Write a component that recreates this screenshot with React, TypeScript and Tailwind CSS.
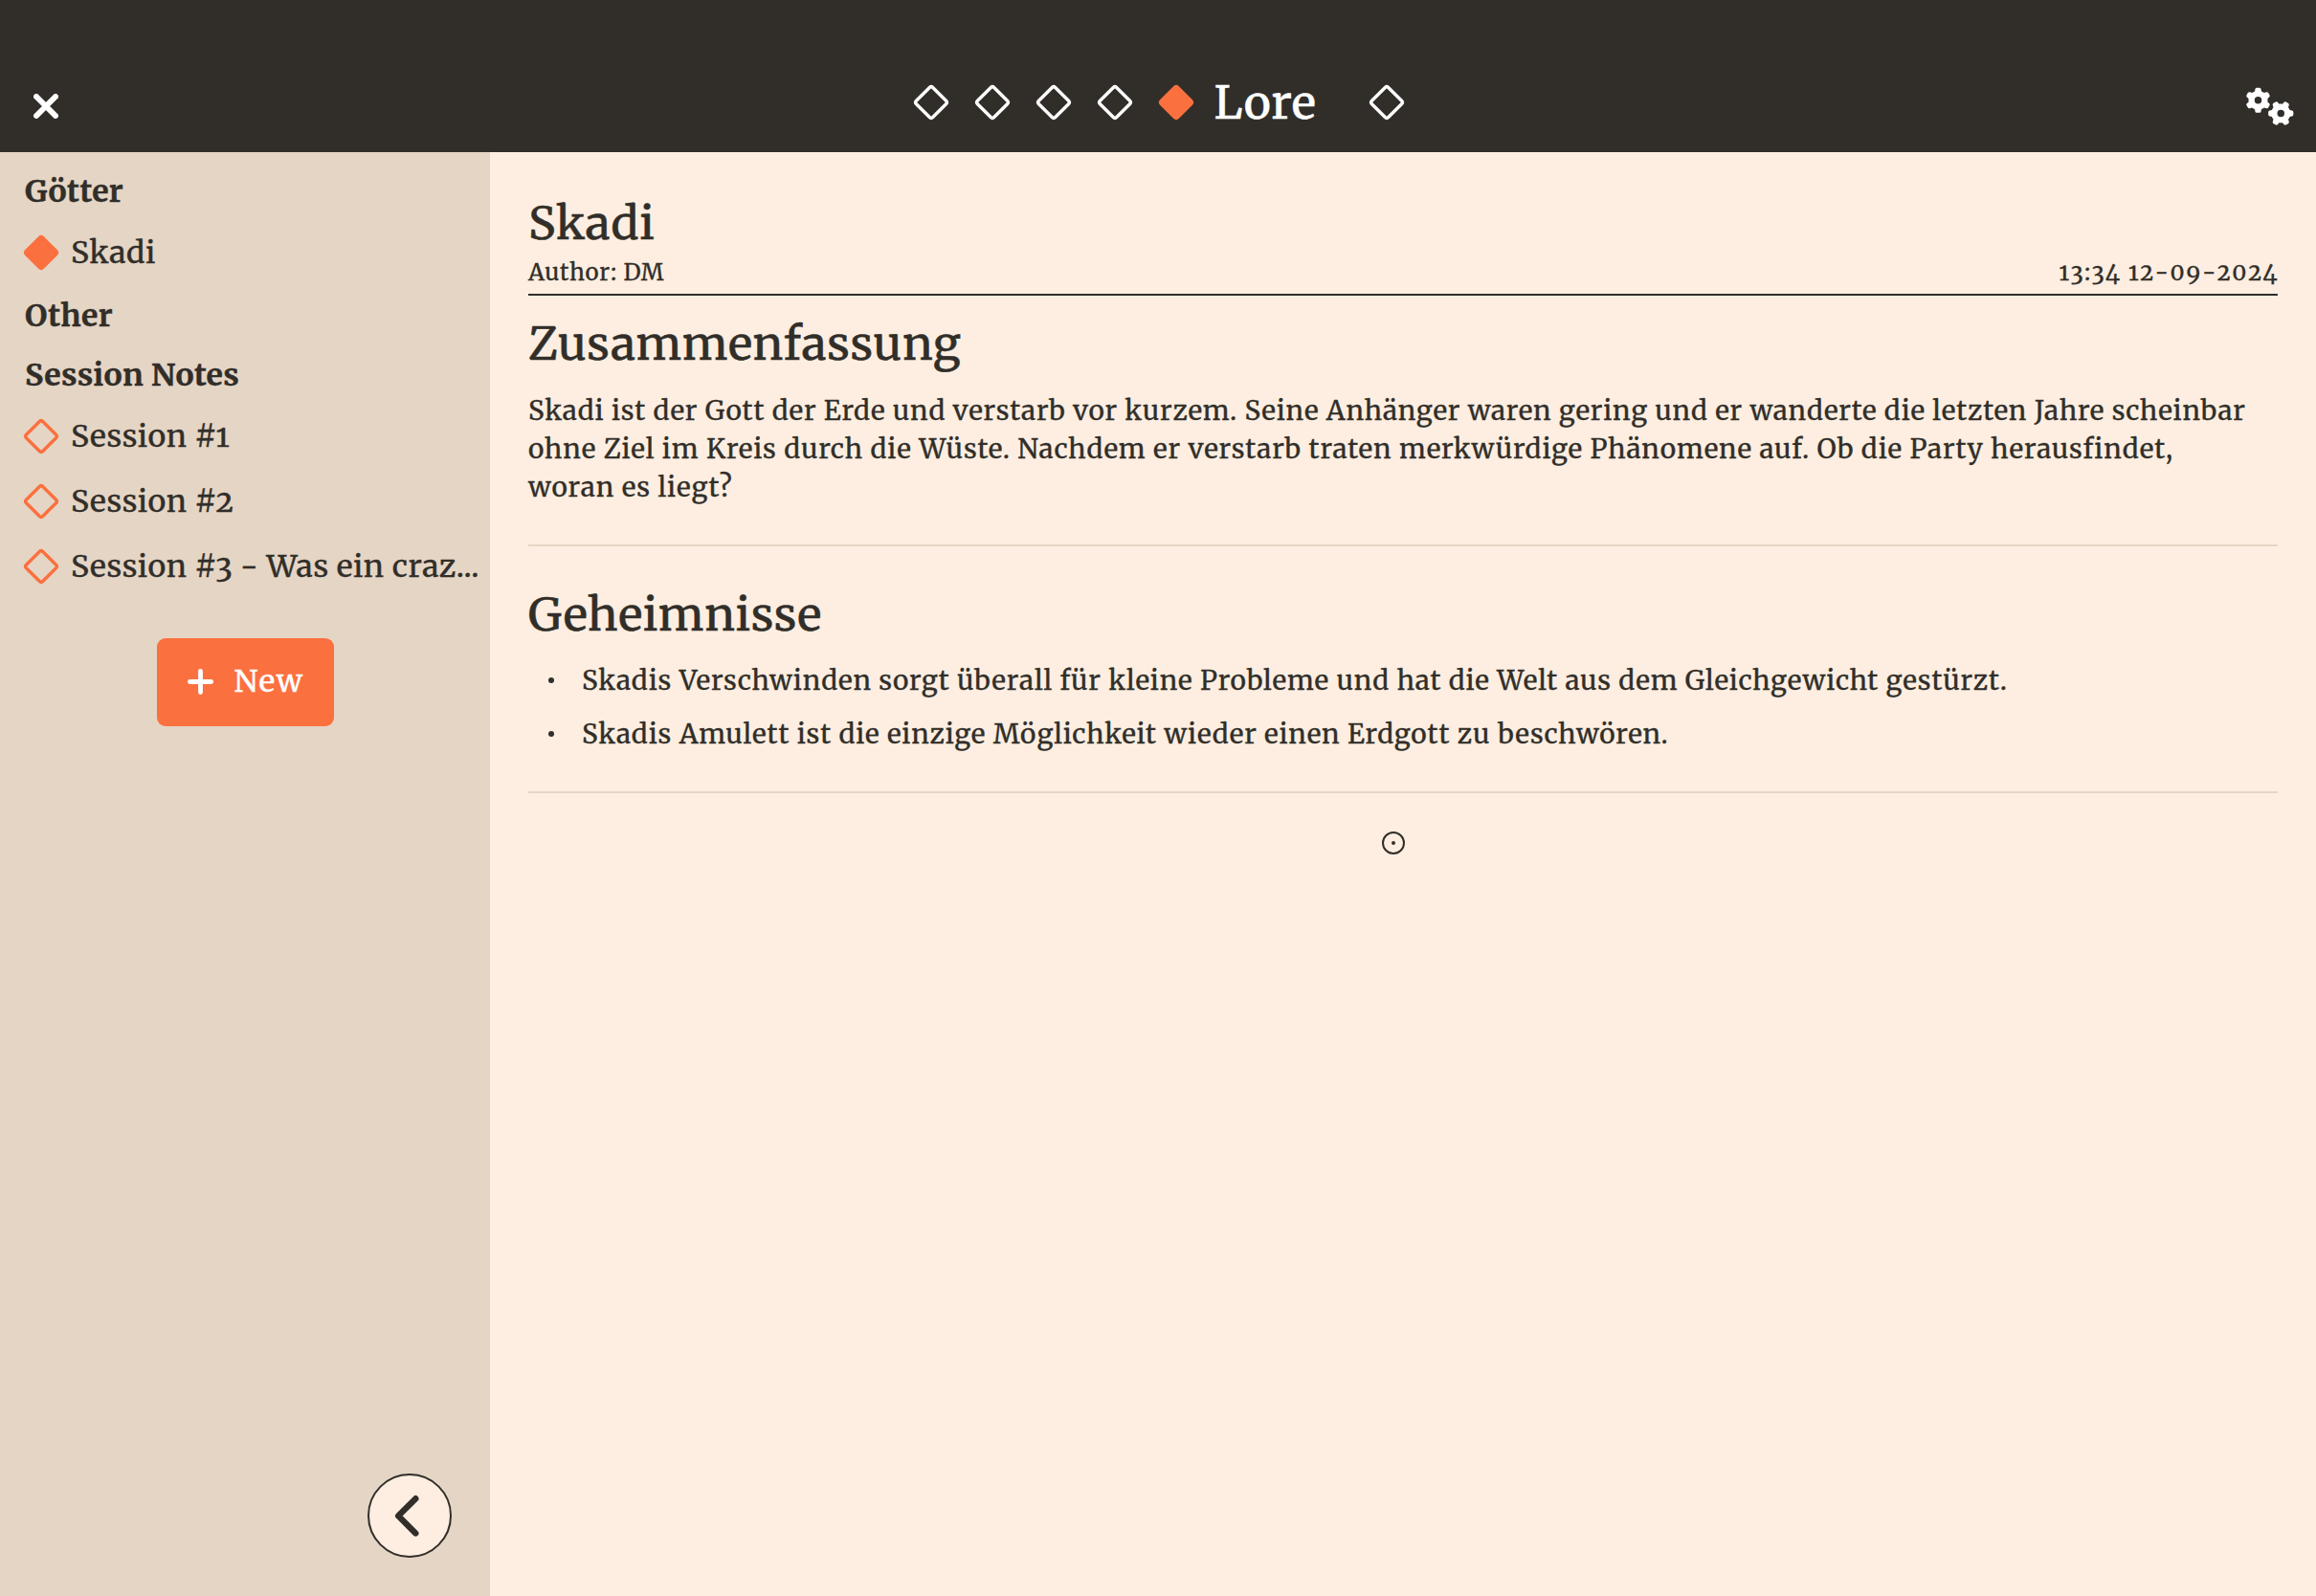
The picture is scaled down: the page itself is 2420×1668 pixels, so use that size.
import { FaGears } from "react-icons/fa6";

function Diamond({ className }: { className: string }) {
  return (
    <svg className={`size-[38px] shrink-0 ${className}`} viewBox="-19 -19 38 38" stroke="currentColor" strokeWidth="3.4">
      <rect x="-12.2" y="-12.2" width="24.4" height="24.4" rx="2.4" transform="rotate(45)" />
    </svg>
  );
}

function Header() {
  return (
    <header className="grid h-[159px] shrink-0 grid-cols-[1fr_auto_1fr] items-center bg-[#312e29] pt-14 text-white">
      <button aria-label="Close" className="mt-[7px] ml-[35px] justify-self-start">
        <svg className="size-[26px]" viewBox="0 0 26 26" fill="none" stroke="currentColor" strokeWidth="6" strokeLinecap="round">
          <path d="M3 3l20 20M23 3L3 23" />
        </svg>
      </button>
      <nav className="flex items-center gap-[26px] pb-px pl-px">
        <Diamond className="fill-none text-white" />
        <Diamond className="fill-none text-white" />
        <Diamond className="fill-none text-white" />
        <Diamond className="fill-none text-white" />
        <Diamond className="fill-[#fb703f] text-[#fb703f]" />
        <span className="-ml-[5px] w-[135px] text-5xl leading-[60px] tracking-[0.9px] [-webkit-text-stroke:0.5px]">Lore</span>
        <Diamond className="fill-none text-white" />
      </nav>
      <button aria-label="Settings" className="mt-[7px] mr-[23px] justify-self-end">
        <FaGears className="h-10 w-[50px]" />
      </button>
    </header>
  );
}

function Group({ title }: { title: string }) {
  return <h2 className="h-[62px] pl-[26px] text-[32px] leading-[62px] font-bold tracking-[0.4px]">{title}</h2>;
}

function Entry({ title, active = false }: { title: string; active?: boolean }) {
  return (
    <div className="flex h-[68px] items-center gap-3 pb-0.5 pl-6">
      <Diamond className={active ? "fill-[#fb703f] text-[#fb703f]" : "fill-none text-[#fb703f]"} />
      <span className="text-[32px] tracking-[0.56px] whitespace-nowrap">{title}</span>
    </div>
  );
}

function Sidebar() {
  return (
    <aside className="flex w-[512px] shrink-0 flex-col bg-[#e5d5c5] pt-2.5 [-webkit-text-stroke:0.35px]">
      <Group title="Götter" />
      <Entry title="Skadi" active />
      <Group title="Other" />
      <Group title="Session Notes" />
      <Entry title="Session #1" />
      <Entry title="Session #2" />
      <Entry title="Session #3 - Was ein craz..." />
      <button className="mt-10 flex h-[92px] w-[185px] items-center gap-[22px] self-center rounded-[9px] bg-[#fb703f] pb-0.5 pl-8 text-white">
        <svg className="size-[27px]" viewBox="0 0 27 27" fill="none" stroke="currentColor" strokeWidth="4.8" strokeLinecap="round">
          <path d="M13.5 2.4v22.2M2.4 13.5h22.2" />
        </svg>
        <span className="text-[32px] tracking-[1.4px]">New</span>
      </button>
      <button
        aria-label="Collapse sidebar"
        className="mt-auto mr-10 mb-10 flex size-[88px] items-center justify-center self-end rounded-full border-2 border-[#312e29] bg-[#fdeee1]"
      >
        <svg className="mr-1.5 h-11 w-[26px]" viewBox="0 0 26 44" fill="none" stroke="currentColor" strokeWidth="6.4" strokeLinecap="round" strokeLinejoin="round">
          <path d="M22.3 4.2L4.2 22.3l18.1 18.1" />
        </svg>
      </button>
    </aside>
  );
}

function Title({ className, text }: { className: string; text: string }) {
  return (
    <h2 className={`h-[60px] text-5xl leading-[60px] tracking-[0.62px] [-webkit-text-stroke:0.5px] ${className}`}>{text}</h2>
  );
}

function Bullet({ text }: { text: string }) {
  return (
    <li className="flex h-14 items-center">
      <span className="mr-[29px] ml-[21px] size-1.5 rounded-full bg-[#312e29]" />
      <span className="whitespace-nowrap">{text}</span>
    </li>
  );
}

function Article() {
  return (
    <main className="flex min-w-0 flex-1 flex-col bg-[#fdeee1] px-10 pt-11 text-[28px] tracking-[0.84px] [-webkit-text-stroke:0.3px]">
      <Title className="" text="Skadi" />
      <div className="flex h-[46px] justify-between border-b-2 border-[#312e29] text-2xl leading-[43px]">
        <span>Author: DM</span>
        <span className="-mr-px tracking-[1.75px] [font-kerning:none]">13:34 12-09-2024</span>
      </div>
      <Title className="mt-5" text="Zusammenfassung" />
      <p className="mt-5 flex flex-col leading-10 whitespace-nowrap">
        <span className="tracking-[0.815px]">
          Skadi ist der Gott der Erde und verstarb vor kurzem. Seine Anhänger waren gering und er wanderte die letzten
          Jahre scheinbar
        </span>
        <span className="tracking-[0.88px]">
          ohne Ziel im Kreis durch die Wüste. Nachdem er verstarb traten merkwürdige Phänomene auf. Ob die Party
          herausfindet,
        </span>
        <span className="tracking-[0.9px]">woran es liegt?</span>
      </p>
      <hr className="mt-10 border-t-2 border-[#e5d5c5]" />
      <Title className="mt-[41px]" text="Geheimnisse" />
      <ul className="mt-[11px]">
        <Bullet text="Skadis Verschwinden sorgt überall für kleine Probleme und hat die Welt aus dem Gleichgewicht gestürzt." />
        <Bullet text="Skadis Amulett ist die einzige Möglichkeit wieder einen Erdgott zu beschwören." />
      </ul>
      <hr className="mt-8 border-t-2 border-[#e5d5c5]" />
    </main>
  );
}

export default function App() {
  return (
    <div className="relative flex h-[1668px] w-[2420px] flex-col overflow-hidden font-['Merriweather','DejaVu_Serif_Condensed','DejaVu_Serif',serif] text-[#312e29] oldstyle-nums">
      <Header />
      <div className="flex flex-1">
        <Sidebar />
        <Article />
      </div>
      <span className="absolute top-[869px] left-[1444px] flex size-6 items-center justify-center rounded-full border-2 border-[#312e29]">
        <span className="size-1 rounded-full bg-[#312e29]" />
      </span>
    </div>
  );
}
